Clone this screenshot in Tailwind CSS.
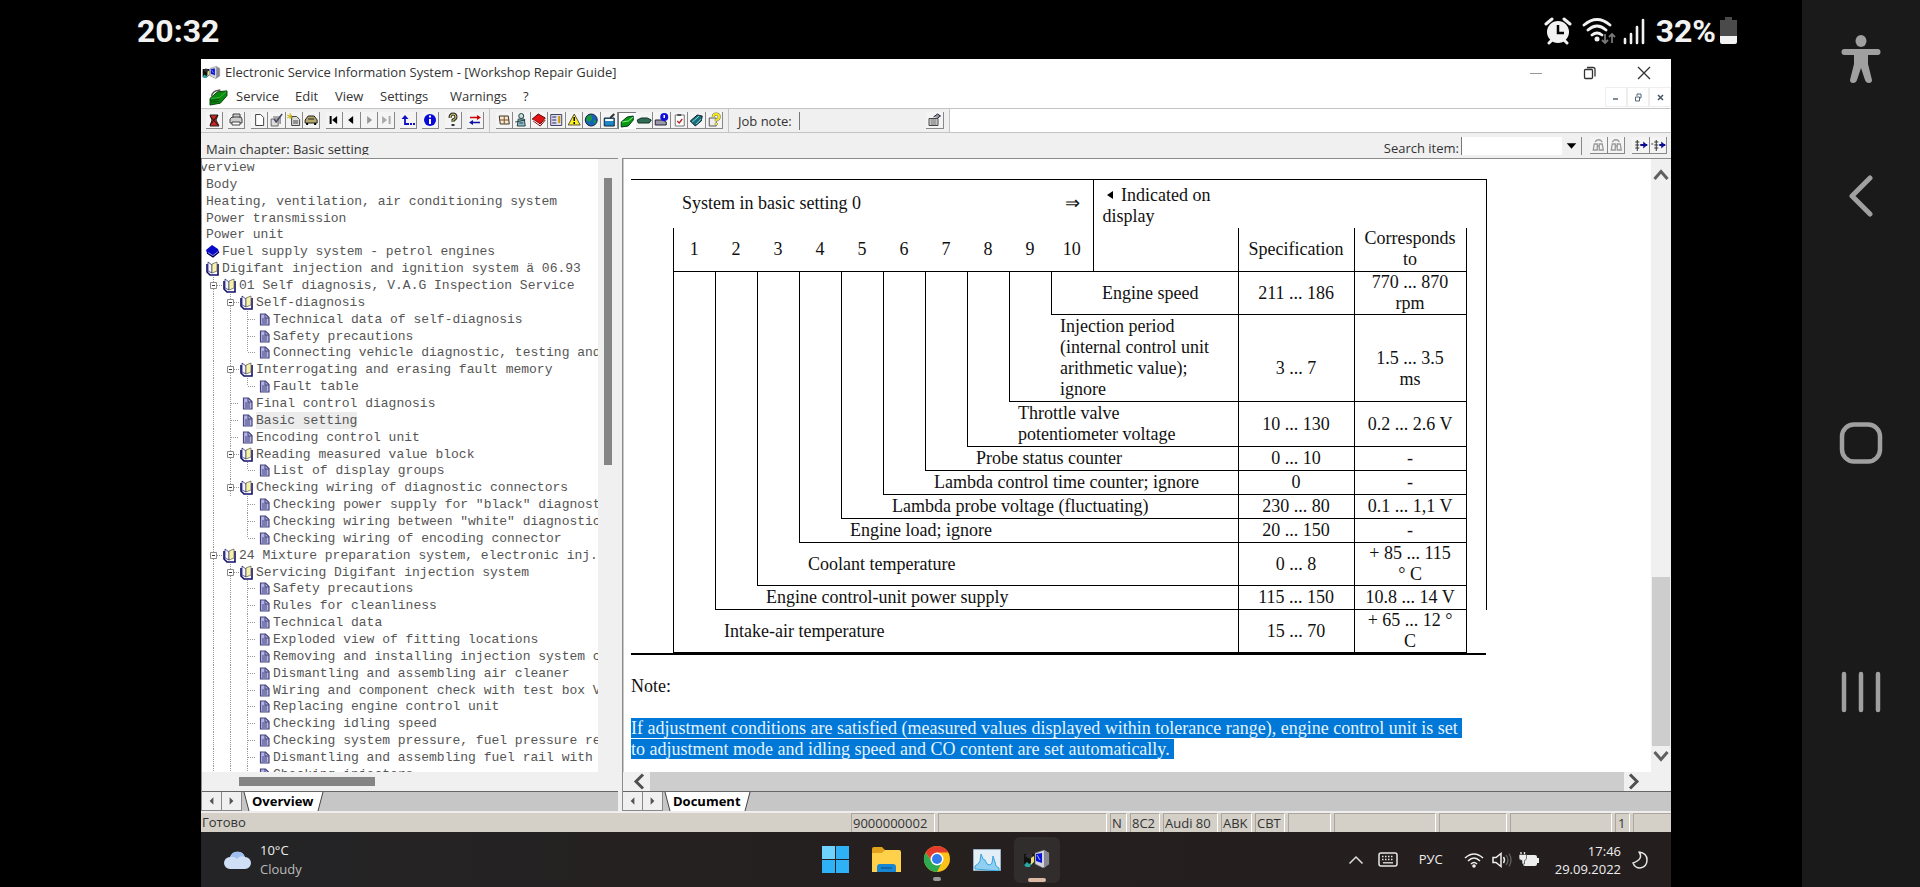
<!DOCTYPE html>
<html lang="en">
<head>
    <meta charset="UTF-8">
    <meta name="viewport" content="width=device-width, initial-scale=1.0">
    <title>Electronic Service Information System</title>
    <script src="https://cdn.jsdelivr.net/npm/@tailwindcss/browser@4"></script>
</head>
<body class="bg-black min-h-screen flex font-['Open_Sans','Noto_Sans',sans-serif] text-[13px] text-[#333] overflow-x-hidden">

    <!-- icons used by the contents tree -->
    <svg class="hidden">
        <symbol id="t-line" viewBox="0 0 17 17"><path d="M8.5 0v17" stroke="#999" stroke-dasharray="1 1"/></symbol>
        <symbol id="t-tee" viewBox="0 0 17 17"><path d="M8.5 0v17M9 8.5h8" stroke="#999" stroke-dasharray="1 1"/></symbol>
        <symbol id="t-end" viewBox="0 0 17 17"><path d="M8.5 0v8M9 8.5h8" stroke="#999" stroke-dasharray="1 1"/></symbol>
        <symbol id="t-box" viewBox="0 0 17 17"><path d="M8.5 0v17M12 8.5h5" stroke="#999" stroke-dasharray="1 1"/><path d="M5.5 5.5h6v6h-6z" fill="#fff" stroke="#8a8a8a"/><path d="M7 8.5h3" stroke="#333"/></symbol>
        <symbol id="t-book" viewBox="0 0 17 17"><path d="M2 4v8l3 3h8V4" fill="none" stroke="#10106a" stroke-width="1.6"/><path d="M3 2l4 3v8l-4-2z" fill="#f4f4ff" stroke="#10106a" stroke-width=".7"/><path d="M7 4l5-2v9l-5 2z" fill="#f8f2a8" stroke="#555" stroke-width=".7"/></symbol>
        <symbol id="t-closed" viewBox="0 0 17 17"><path d="M1 7l6-5 6 4 1 3-6 5-6-4z" fill="#0808c8"/><path d="M2 10l6 4 6-5" fill="none" stroke="#000050" stroke-width="1.2"/><path d="M3 9.5l5 3 5-4" fill="none" stroke="#ccd" stroke-width=".7"/></symbol>
        <symbol id="t-doc" viewBox="0 0 17 17"><path d="M4.5 3h5l3.500 3.500V14H4.500z" fill="#b4b4e4" stroke="#44447c" stroke-width="1.200"/><path d="M9 3v4h4M6 8h5M6 10h5M6 12h5" fill="none" stroke="#44447c"/></symbol>
        <symbol id="app" viewBox="0 0 28 20"><path d="M1 5h10v9l-4 3H1z" fill="#111"/><path d="M2 7l3-3 4 1 1 3-3 2z" fill="#333"/><path d="M1 16l3-3 2 2 3-2-2 5H3z" fill="#2aa7a0"/><path d="M8 9l3-2v6l-3 3z" fill="#eadf80"/><path d="M12 4l9-3 5 3v11l-6 4-8-4z" fill="#d4d4dc" stroke="#555" stroke-width=".6"/><path d="M21 1l5 3v11l-5 4z" fill="#888895"/><path d="M13 5l6-1v10l-6-2z" fill="#0a14d8"/><path d="M14 6l3 5" stroke="#9ab8ff"/></symbol>
        <symbol id="greenbook" viewBox="0 0 20 18"><path d="M1 10L9 3l10-1v5l-7 8-11 2z" fill="#0a8a10" stroke="#053a05"/><path d="M2 10l9-1 7-6" fill="none" stroke="#3fb83f"/><path d="M2 12l9-1M2 14l9-1" stroke="#044d06"/><path d="M3 8q-1-3 4-6l5-1" fill="none" stroke="#555" stroke-width="1.5"/></symbol>
    </svg>

    <div class="flex-1 min-w-0 flex flex-col">

        <!-- phone status bar -->
        <header class="h-[59px] pl-[137px] pr-[65px] pt-[2px] flex items-center justify-between text-[#f2f2f2] font-['Roboto',sans-serif] font-bold text-[32px]">
            <span>20:32</span>
            <div class="flex items-center">
                <svg class="w-[28px] h-[28px] mr-[10px]" viewBox="0 0 28 28"><circle cx="14" cy="15" r="11" fill="#f2f2f2"/><path d="M2 7l6-5M26 7l-6-5M5 26l3-3M23 26l-3-3" stroke="#f2f2f2" stroke-width="3" stroke-linecap="round"/><path d="M14 8v8h6" fill="none" stroke="#000" stroke-width="2.500"/></svg>
                <svg class="w-[34px] h-[28px] mr-[6px]" viewBox="0 0 34 28"><g fill="none" stroke="#f2f2f2" stroke-width="2.800" stroke-linecap="round"><path d="M2 8q13-11 26 0M6 13q9-8 18 0M10 18q5-4 10 0"/></g><circle cx="15" cy="22" r="2.500" fill="#f2f2f2"/><path d="M23 17v9M20 23l3 3 3-3M30 26v-9M27 20l3-3 3 3" fill="none" stroke="#777" stroke-width="1.800"/></svg>
                <svg class="w-[24px] h-[28px] mr-[10px]" viewBox="0 0 24 28"><path d="M3 22v4M9 17v9M15 10v16M21 3v23" stroke="#f2f2f2" stroke-width="2.600" stroke-linecap="round"/></svg>
                <span>32%</span>
                <svg class="w-[17px] h-[27px] ml-1" viewBox="0 0 17 27"><path d="M5 0h7v3h5v16H0V3h5z" fill="#4a4a4a"/><path d="M0 19h17v6q0 2-2 2H2q-2 0-2-2z" fill="#f2f2f2"/></svg>
            </div>
        </header>

        <!-- application window -->
        <main class="flex-1 min-w-0 ml-[201px] mr-[131px] flex flex-col bg-[#f0f0f0]">

            <div class="h-[26px] bg-white flex items-center pl-px pt-px">
                <svg class="w-[19px] h-[15px] mr-1"><use href="#app"/></svg>
                <h1>Electronic Service Information System - [Workshop Repair Guide]</h1>
                <div class="ml-auto flex items-center gap-[40px] pr-5">
                    <button aria-label="Minimize"><svg class="w-[14px] h-[14px]" viewBox="0 0 14 14"><path d="M1 7.500h12" stroke="#999"/></svg></button>
                    <button aria-label="Restore"><svg class="w-[14px] h-[14px]" viewBox="0 0 14 14"><path d="M1.500 4.500q0-1 1-1h6q1 0 1 1v7q0 1-1 1h-6q-1 0-1-1zM4 1.500h6q2 0 2 2v7" fill="none" stroke="#333" stroke-width="1.300"/></svg></button>
                    <button aria-label="Close"><svg class="w-[14px] h-[14px]" viewBox="0 0 14 14"><path d="M1 1l12 12M13 1L1 13" stroke="#333" stroke-width="1.300"/></svg></button>
                </div>
            </div>

            <nav class="h-6 bg-white border-b border-[#c4c4c4] flex items-center pl-2 pt-px">
                <svg class="w-[19px] h-[17px] mr-2"><use href="#greenbook"/></svg>
                <button class="w-[59px] text-left">Service</button>
                <button class="w-10 text-left">Edit</button>
                <button class="w-[45px] text-left">View</button>
                <button class="w-[70px] text-left">Settings</button>
                <button class="w-[73px] text-left">Warnings</button>
                <button>?</button>
                <div class="ml-auto flex h-5">
                    <button class="w-[22px] border border-[#eee]" aria-label="Minimize document"><svg class="w-full h-[18px]" viewBox="0 0 20 18"><path d="M7 11h5" stroke="#567" stroke-width="1.500"/></svg></button>
                    <button class="w-[22px] border border-[#eee]" aria-label="Restore document"><svg class="w-full h-[18px]" viewBox="0 0 20 18"><path d="M7.500 9h4v4h-4zM9 8V6h4v4h-1.500" fill="none" stroke="#567"/></svg></button>
                    <button class="w-[22px] border border-[#eee]" aria-label="Close document"><svg class="w-full h-[18px]" viewBox="0 0 20 18"><path d="M8 7l5 5M13 7l-5 5" stroke="#456" stroke-width="1.500"/></svg></button>
                </div>
            </nav>

            <div class="h-6 bg-white border-b border-[#c4c4c4] flex">
                <div id="toolbar" class="bg-[#f0f0f0] border-r border-[#c4c4c4] w-[749px] flex items-center pl-[5px]"></div>
            </div>

            <div class="h-[25px] flex">
                <p class="pl-[5px] pt-[7px] h-[22px] overflow-hidden leading-[18px]">Main chapter: Basic setting</p>
                <div class="ml-auto flex items-center pr-1">
                    <label for="search" class="mr-[2px] pt-[6px]">Search item:</label>
                    <input id="search" class="w-[101px] h-[18px] bg-white border-l border-[#777] outline-none">
                    <button aria-label="Search history" class="w-[20px] h-[18px] border-r border-[#888]"><svg class="w-full h-full" viewBox="0 0 20 18"><path d="M5 6h10l-5 6z" fill="#000"/></svg></button>
                    <div id="searchtools" class="flex ml-2"></div>
                </div>
            </div>

            <div class="flex-1 min-h-0 flex gap-1">

                <!-- contents tree -->
                <section class="w-[417px] flex flex-col border-t border-l border-[#8c8c8c]">
                    <div class="h-[613px] flex">
                        <ul id="tree" class="flex-1 min-w-0 h-full overflow-hidden bg-white pl-[3px] font-['Liberation_Mono',monospace] text-[#555]"></ul>
                        <div class="w-[20px] pt-[19px] pl-[6px]"><div class="w-2 h-[287px] bg-[#858585]"></div></div>
                    </div>
                    <div class="h-[19px] pl-[37px] pt-[5px]"><div class="w-[136px] h-[9px] bg-[#858585]"></div></div>
                    <div class="h-5 flex bg-[#c6c6c6] border-t border-[#666]">
                        <button aria-label="Previous tab" class="w-5 bg-[#f0f0f0] border-r border-b border-[#888]"><svg class="w-full h-full" viewBox="0 0 20 18"><path d="M12 5v8l-4-4z" fill="#555"/></svg></button>
                        <button aria-label="Next tab" class="w-5 bg-[#f0f0f0] border-r border-b border-[#888]"><svg class="w-full h-full" viewBox="0 0 20 18"><path d="M8 5v8l4-4z" fill="#555"/></svg></button>
                        <svg class="w-[8px] h-[19px]" viewBox="0 0 8 19"><path d="M2 0h6v19H7z" fill="#fff"/><path d="M2 0l5 19" stroke="#444"/></svg>
                        <button class="bg-white text-black font-bold leading-[19px] px-[2px]">Overview</button>
                        <svg class="w-[8px] h-[19px]" viewBox="0 0 8 19"><path d="M0 0h7L2 19H0z" fill="#fff"/><path d="M7 0L2 19" stroke="#444"/></svg>
                    </div>
                </section>

                <!-- document -->
                <section class="flex-1 min-w-0 flex flex-col border-t border-l border-[#8c8c8c]">
                    <div class="h-[613px] flex border-l border-[#c8c8c8]">
                        <article class="flex-1 min-w-0 overflow-hidden bg-white pl-[7px] pt-5 font-['Liberation_Serif',serif] text-[18px] leading-[21px] text-[#111]">
                            <div class="w-[855px] border-b-2 border-black">
                                <table class="w-[855px] table-fixed border-collapse">
                                    <colgroup>
                                        <col class="w-[42px]">
                                        <col class="w-[42px]" span="10">
                                        <col class="w-[145px]">
                                        <col class="w-[116px]">
                                        <col class="w-[112px]">
                                        <col class="w-[20px]">
                                    </colgroup>
                                    <tbody id="display">
                                        <tr class="h-12">
                                            <td class="border-t border-black" rowspan="2"></td>
                                            <td class="border-t border-r border-black px-[9px]" colspan="10"><div class="flex justify-between pr-1"><span>System in basic setting 0</span><span>⇒</span></div></td>
                                            <td class="border-t border-b border-black pl-[9px] pt-[5px] align-top whitespace-nowrap" rowspan="2"><svg class="inline w-[6px] h-[8px] mx-1 mb-1" viewBox="0 0 6 8"><path d="M6 0v8L0 4z"/></svg> Indicated on<br>display</td>
                                            <td class="border-t border-black" colspan="2"></td>
                                            <td class="border-t border-r border-black" rowspan="11"></td>
                                        </tr>
                                        <tr class="h-11 text-center">
                                            <td class="border-l border-black">1</td><td>2</td><td>3</td><td>4</td><td>5</td><td>6</td><td>7</td><td>8</td><td>9</td>
                                            <td class="border-r border-black">10</td>
                                            <th class="border-x border-b border-black font-normal">Specification</th>
                                            <th class="border-x border-b border-black font-normal">Corresponds<br>to</th>
                                        </tr>
                                    </tbody>
                                </table>
                            </div>
                            <p class="mt-[21px]">Note:</p>
                            <p class="mt-[21px] text-[#e6f4ff] whitespace-nowrap"><span class="bg-[#0078d7]">If adjustment conditions are satisfied (measured values displayed within tolerance range), engine control unit is set&nbsp;</span><br><span class="bg-[#0078d7]">to adjustment mode and idling speed and CO content are set automatically.&nbsp;</span></p>
                        </article>
                        <div class="w-[20px] flex flex-col items-center">
                            <button aria-label="Scroll up" class="h-[26px]"><svg class="w-[16px] h-[26px]" viewBox="0 0 16 26"><path d="M1.500 20L8 12.500l6.500 7.500" fill="none" stroke="#606060" stroke-width="3"/></svg></button>
                            <div class="flex-1"></div>
                            <div class="w-[18px] h-[169px] bg-[#cdcdcd]"></div>
                            <button aria-label="Scroll down" class="h-[26px]"><svg class="w-[16px] h-[26px]" viewBox="0 0 16 26"><path d="M1.500 6L8 13.500 14.500 6" fill="none" stroke="#606060" stroke-width="3"/></svg></button>
                        </div>
                    </div>
                    <div class="h-[19px] flex pr-[20px]">
                        <button aria-label="Scroll left" class="w-[27px]"><svg class="w-full h-[19px]" viewBox="0 0 27 19"><path d="M20 2.500l-7 7 7 7" fill="none" stroke="#505050" stroke-width="3"/></svg></button>
                        <div class="flex-1 bg-[#cdcdcd]"></div>
                        <button aria-label="Scroll right" class="w-[27px]"><svg class="w-full h-[19px]" viewBox="0 0 27 19"><path d="M6 2.500l7 7-7 7" fill="none" stroke="#505050" stroke-width="3"/></svg></button>
                    </div>
                    <div class="h-5 flex bg-[#c6c6c6] border-t border-[#666]">
                        <button aria-label="Previous tab" class="w-5 bg-[#f0f0f0] border-r border-b border-[#888]"><svg class="w-full h-full" viewBox="0 0 20 18"><path d="M12 5v8l-4-4z" fill="#555"/></svg></button>
                        <button aria-label="Next tab" class="w-5 bg-[#f0f0f0] border-r border-b border-[#888]"><svg class="w-full h-full" viewBox="0 0 20 18"><path d="M8 5v8l4-4z" fill="#555"/></svg></button>
                        <svg class="w-[8px] h-[19px]" viewBox="0 0 8 19"><path d="M2 0h6v19H7z" fill="#fff"/><path d="M2 0l5 19" stroke="#444"/></svg>
                        <button class="bg-white text-black font-bold leading-[19px] px-[2px]">Document</button>
                        <svg class="w-[8px] h-[19px]" viewBox="0 0 8 19"><path d="M0 0h7L2 19H0z" fill="#fff"/><path d="M7 0L2 19" stroke="#444"/></svg>
                    </div>
                </section>
            </div>

            <footer class="h-[21px] bg-[#d4d0c8] border-t-2 border-[#eee] flex gap-[3px] leading-[19px] whitespace-nowrap">
                <span class="flex-1 pl-px">Готово</span>
                <span class="w-[84px] pl-px border-t border-l border-r border-t-[#aaa69e] border-l-[#aaa69e] border-r-white">9000000002</span>
                <span class="w-[169px] border-t border-l border-r border-t-[#aaa69e] border-l-[#aaa69e] border-r-white"></span>
                <span class="w-[17px] pl-px border-t border-l border-r border-t-[#aaa69e] border-l-[#aaa69e] border-r-white">N</span>
                <span class="w-[30px] pl-px border-t border-l border-r border-t-[#aaa69e] border-l-[#aaa69e] border-r-white">8C2</span>
                <span class="w-[55px] pl-px border-t border-l border-r border-t-[#aaa69e] border-l-[#aaa69e] border-r-white">Audi 80</span>
                <span class="w-[31px] pl-px border-t border-l border-r border-t-[#aaa69e] border-l-[#aaa69e] border-r-white">ABK</span>
                <span class="w-[30px] pl-px border-t border-l border-r border-t-[#aaa69e] border-l-[#aaa69e] border-r-white">CBT</span>
                <span class="w-[43px] border-t border-l border-r border-t-[#aaa69e] border-l-[#aaa69e] border-r-white"></span>
                <span class="w-[102px] border-t border-l border-r border-t-[#aaa69e] border-l-[#aaa69e] border-r-white"></span>
                <span class="w-[68px] border-t border-l border-r border-t-[#aaa69e] border-l-[#aaa69e] border-r-white"></span>
                <span class="w-[102px] border-t border-l border-r border-t-[#aaa69e] border-l-[#aaa69e] border-r-white"></span>
                <span class="w-[15px] pl-[2px] border-t border-l border-r border-t-[#aaa69e] border-l-[#aaa69e] border-r-white">1</span>
                <span class="w-[38px] border-t border-l border-t-[#aaa69e] border-l-[#aaa69e]"></span>
            </footer>

            <!-- Windows taskbar -->
            <div class="h-[55px] grid grid-cols-[1fr_auto_1fr] items-center bg-linear-to-r from-[#242426] via-[#251f1e] to-[#241e1f] text-[#eee]">
                <div class="flex items-center gap-2 pl-[22px] leading-[19px]">
                    <svg class="w-[29px] h-[20px]" viewBox="0 0 29 20"><path d="M7 19a6 6 0 010-12 8 8 0 0115 0 6 6 0 010 12z" fill="#cfdff5"/><path d="M7 7a8 8 0 0115 0q-5-2-8 2-3-3-7-2z" fill="#9fbfee"/></svg>
                    <div><p>10°C</p><p class="text-[#bbb]">Cloudy</p></div>
                </div>
                <div class="flex items-center pl-[10px]">
                    <button aria-label="Start" class="w-[27px] mr-[23px]"><svg class="w-[27px] h-[27px]" viewBox="0 0 27 27"><path d="M0 0h13v13H0zM14 0h13v13H14zM0 14h13v13H0zM14 14h13v13H14z" fill="#2fb2f5"/><path d="M0 0h13v13H0z" fill="#6ed4ff"/></svg></button>
                    <button aria-label="Files" class="w-[29px] mr-[22px]"><svg class="w-[29px] h-[27px]" viewBox="0 0 29 27"><path d="M0 3q0-2 2-2h8l3 3h14v5H0z" fill="#e0a21c"/><path d="M0 7h10l3-3h14q2 0 2 2v20H0z" fill="#ffd04a"/><path d="M5 26v-5q0-3 3-3h13q3 0 3 3v5z" fill="#1787d4"/><path d="M9 22h11" stroke="#0b5da0" stroke-width="1.500"/></svg></button>
                    <button aria-label="Chrome" class="w-[28px] mr-[22px]"><svg class="w-[28px] h-[38px] mt-[6px]" viewBox="0 0 28 38"><circle cx="14" cy="15" r="13" fill="#fbc116"/><path d="M2.700 8.500A13 13 0 0014 28l5-10-10 0z" fill="#2da94f"/><path d="M2.700 8.500A13 13 0 0125.300 8.500H14l-5 9z" fill="#e33b2e"/><circle cx="14" cy="15" r="6.500" fill="#fff"/><circle cx="14" cy="15" r="5" fill="#2f7cea"/><rect x="10" y="33" width="8" height="4" rx="2" fill="#999"/></svg></button>
                    <button aria-label="Performance monitor" class="w-[28px] mr-[13px]"><svg class="w-[28px] h-[22px]" viewBox="0 0 28 22"><path d="M.5.500h27v21H.5z" fill="#e3eef6" stroke="#9bb0c0"/><path d="M2 20v-3l3-2 2-3 1-7 2 5 2 1 2 4 3 1 2-2 1-7 2 6 1 4 3 2v3z" fill="#8fd0f2" stroke="#3aa3dc"/></svg></button>
                    <button aria-label="Service information" class="w-[46px] h-[46px] rounded-md bg-[#322d2d] flex flex-col items-center pt-[12px]"><svg class="w-[28px] h-[20px]"><use href="#app"/></svg><span class="mt-[9px] w-[18px] h-1 rounded-full bg-[#dcb9a4]"></span></button>
                </div>
                <div class="flex items-center justify-end pr-[23px]">
                    <button aria-label="Hidden icons" class="mr-[14px]"><svg class="w-[16px] h-[10px]" viewBox="0 0 16 10"><path d="M1.500 8.500L8 2l6.500 6.500" fill="none" stroke="#ddd" stroke-width="1.500"/></svg></button>
                    <svg class="w-[20px] h-[15px] mr-[21px]" viewBox="0 0 20 15"><rect x="1" y="1" width="18" height="13" rx="2" fill="none" stroke="#e6e6e6" stroke-width="1.500"/><path d="M4 4.500h12M4 7.500h12" stroke="#e6e6e6" stroke-width="1.500" stroke-dasharray="1.500 1.500"/><path d="M5 10.800h10" stroke="#e6e6e6" stroke-width="1.300"/></svg>
                    <span class="mr-[21px]">РУС</span>
                    <svg class="w-[20px] h-[16px] mr-2" viewBox="0 0 20 16"><path d="M1 6q9-8 18 0M4 9q6-6 12 0M7 12q3-3 6 0" fill="none" stroke="#eee" stroke-width="1.600"/><circle cx="10" cy="14" r="1.800" fill="#eee"/></svg>
                    <svg class="w-[20px] h-[16px] mr-[7px]" viewBox="0 0 20 16"><path d="M1 5.500h3l5-4v13l-5-4H1z" fill="none" stroke="#eee" stroke-width="1.500"/><path d="M11.500 5q2 3 0 6" fill="none" stroke="#eee" stroke-width="1.400"/><path d="M14 3q4 5 0 10M17 1.500q4 6.500 0 13" fill="none" stroke="#666" stroke-width="1.200"/></svg>
                    <svg class="w-[20px] h-[16px] mr-4" viewBox="0 0 20 16"><path d="M7 3h9q2 0 2 2v7q0 2-2 2H6q-2 0-2-2V9" fill="#eee"/><path d="M18 6h2v5h-2z" fill="#eee"/><path d="M2 0v3M5.500 0v3" stroke="#eee" stroke-width="1.300"/><path d="M0 2.500h7.500V6q0 2-2 2.500V12H3V8.500Q0 8 0 6z" fill="#eee" stroke="#241e1f" stroke-width=".6"/></svg>
                    <div class="text-right leading-[18px] mr-[10px]"><p>17:46</p><p>29.09.2022</p></div>
                    <svg class="w-[17px] h-[18px]" viewBox="0 0 17 18"><path d="M8 1q5 7-6 11 2 5 7 5 7-1 7-8 0-7-8-8z" fill="none" stroke="#e6e6e6" stroke-width="1.500" stroke-linejoin="round"/></svg>
                </div>
            </div>
        </main>
    </div>

    <!-- phone navigation -->
    <aside class="w-[118px] bg-[#1a1a1a] flex flex-col items-center pt-[35px]">
        <button aria-label="Accessibility" class="mb-[92px]"><svg class="w-[40px] h-[48px]" viewBox="0 0 40 48"><g fill="#a0a0a0"><ellipse cx="20" cy="6" rx="5.500" ry="6"/><path d="M3.500 14h33a3 3 0 010 6H27v9l4 16q0 3-3 3t-4-3l-4-12-4 12q-1 3-4 3t-3-3l4-16v-9H3.500a3 3 0 010-6z"/></g></svg></button>
        <button aria-label="Back" class="mb-[205px]"><svg class="w-[26px] h-[42px]" viewBox="0 0 26 42"><path d="M22 3L4 21l18 18" fill="none" stroke="#a0a0a0" stroke-width="5" stroke-linecap="round" stroke-linejoin="round"/></svg></button>
        <button aria-label="Home" class="mb-[207px]"><svg class="w-[44px] h-[42px]" viewBox="0 0 44 42"><rect x="3" y="2.500" width="38" height="37" rx="12" fill="none" stroke="#a0a0a0" stroke-width="4.500"/></svg></button>
        <button aria-label="Recent apps"><svg class="w-[40px] h-[42px]" viewBox="0 0 40 42"><path d="M3 3v36M20 3v36M37 3v36" stroke="#a0a0a0" stroke-width="4.500" stroke-linecap="round"/></svg></button>
    </aside>

    <script>
        // guide letters: | line, + branch, L last branch, - open node
        const guides = { '|': '#t-line', '+': '#t-tee', 'L': '#t-end', '-': '#t-box', ' ': '' };
        const chapters = [
            ['', '', 'verview'],
            ['', '', 'Body'],
            ['', '', 'Heating, ventilation, air conditioning system'],
            ['', '', 'Power transmission'],
            ['', '', 'Power unit'],
            ['', 'closed', 'Fuel supply system - petrol engines'],
            ['', 'book', 'Digifant injection and ignition system ä 06.93'],
            ['-', 'book', '01 Self diagnosis, V.A.G Inspection Service'],
            ['|-', 'book', 'Self-diagnosis'],
            ['||+', 'doc', 'Technical data of self-diagnosis'],
            ['||+', 'doc', 'Safety precautions'],
            ['||L', 'doc', 'Connecting vehicle diagnostic, testing and'],
            ['|-', 'book', 'Interrogating and erasing fault memory'],
            ['||L', 'doc', 'Fault table'],
            ['|+', 'doc', 'Final control diagnosis'],
            ['|+', 'doc', 'Basic setting'],
            ['|+', 'doc', 'Encoding control unit'],
            ['|-', 'book', 'Reading measured value block'],
            ['||L', 'doc', 'List of display groups'],
            ['|-', 'book', 'Checking wiring of diagnostic connectors'],
            ['| +', 'doc', 'Checking power supply for "black" diagnostic'],
            ['| +', 'doc', 'Checking wiring between "white" diagnostic'],
            ['| L', 'doc', 'Checking wiring of encoding connector'],
            ['-', 'book', '24 Mixture preparation system, electronic inj.,'],
            ['|-', 'book', 'Servicing Digifant injection system'],
            ['||+', 'doc', 'Safety precautions'],
            ['||+', 'doc', 'Rules for cleanliness'],
            ['||+', 'doc', 'Technical data'],
            ['||+', 'doc', 'Exploded view of fitting locations'],
            ['||+', 'doc', 'Removing and installing injection system co'],
            ['||+', 'doc', 'Dismantling and assembling air cleaner'],
            ['||+', 'doc', 'Wiring and component check with test box V'],
            ['||+', 'doc', 'Replacing engine control unit'],
            ['||+', 'doc', 'Checking idling speed'],
            ['||+', 'doc', 'Checking system pressure, fuel pressure reg'],
            ['||+', 'doc', 'Dismantling and assembling fuel rail with i'],
            ['||+', 'doc', 'Checking injectors']
        ];

        const cell = id => `<svg class="w-[17px] h-[17px] shrink-0">${id ? `<use href="${id}"/>` : ''}</svg>`;
        document.getElementById('tree').innerHTML = '<li><ul class="h-[624px] flex flex-col">' + chapters.map(([path, icon, name]) => {
            const text = name === 'Basic setting' ? 'bg-[#ececec]' : (name === 'verview' ? '-ml-[5px]' : (icon ? '' : 'pl-px'));
            return `<li class="flex-1 min-h-0 flex items-center whitespace-pre leading-[17px]">${[...path].map(c => cell(guides[c])).join('')}${icon ? cell('#t-' + icon) : ''}<a href="#" class="${text}">${name}</a></li>`;
        }).join('') + '</ul></li>';

        // display group table; the brackets are cells of falling rowspan
        const rows = [
            ['Engine speed', '211 ... 186', '770 ... 870<br>rpm'],
            ['Injection period<br>(internal control unit<br>arithmetic value);<br>ignore', '3 ... 7', '1.5 ... 3.5<br>ms'],
            ['Throttle valve<br>potentiometer voltage', '10 ... 130', '0.2 ... 2.6 V'],
            ['Probe status counter', '0 ... 10', '-'],
            ['Lambda control time counter; ignore', '0', '-'],
            ['Lambda probe voltage (fluctuating)', '230 ... 80', '0.1 ... 1,1 V'],
            ['Engine load; ignore', '20 ... 150', '-'],
            ['Coolant temperature', '0 ... 8', '+ 85 ... 115<br>° C'],
            ['Engine control-unit power supply', '115 ... 150', '10.8 ... 14 V'],
            ['Intake-air temperature', '15 ... 70', '+ 65 ... 12 °<br>C']
        ];
        document.getElementById('display').insertAdjacentHTML('beforeend', rows.map(([name, spec, value], i) => {
            let brackets = '';
            if (i === 0) {
                brackets = '<td rowspan="10"></td>';
                for (let n = 10; n > 0; n--) brackets += `<td rowspan="${n}" class="border border-r-0 border-black"></td>`;
            }
            const drop = i === 1 ? 'pt-[21px]' : '';
            return `<tr class="h-6">${brackets}
                <td colspan="${i + 1}" class="border-b border-black pl-[9px] pt-px pb-px whitespace-nowrap">${name}</td>
                <td class="border border-black text-center whitespace-nowrap ${drop}">${spec}</td>
                <td class="border border-black text-center whitespace-nowrap ${drop}">${value}</td>
                ${i === 9 ? '<td></td>' : ''}</tr>`;
        }).join(''));

        // toolbar pictures, 16x16
        const pics = {
            'Exit': '<path d="M4 3h8l-2 5 3 6H4l2-6z" fill="#c22" stroke="#222"/><path d="M4 4l8 9M12 3l-8 10" stroke="#111"/>',
            'Print': '<path d="M5 6V2h7v4M2 7l2-2h9l1 2v4H2z" fill="#ccc" stroke="#444"/><path d="M4 10h8v3H4z" fill="#fff" stroke="#444"/>',
            'New': '<path d="M4.500 2.500h5l3 3v8h-8z" fill="#fff" stroke="#444"/>',
            'Tick': '<path d="M3 7h7v7H3zM5 5h7v7" fill="#ddd" stroke="#666"/><path d="M6 7l2 3 6-8" fill="none" stroke="#446" stroke-width="1.500"/>',
            'New page': '<path d="M5.500 4.500h5l3 3v6h-8z" fill="#ddd" stroke="#444"/><path d="M7 9h5M7 11h5" stroke="#444"/><path d="M1 3l6 3M4 1v6M1 6l5-3" stroke="#c9b400"/>',
            'Vehicle': '<path d="M2 8l3-4h6l3 4v3H2z" fill="#b5a76a" stroke="#222"/><path d="M5 7h6" stroke="#222"/><path d="M3 12h2M11 12h2" stroke="#000" stroke-width="2"/>',
            'First': '<path d="M4.500 4v8" stroke="#000" stroke-width="2"/><path d="M11 4v8L6 8z"/>',
            'Back': '<path d="M10 4v8L5 8z"/>',
            'Forward': '<path d="M6 4v8l5-4z" fill="#999"/>',
            'Last': '<path d="M4 4v8l5-4z" fill="#aaa"/><path d="M11.500 4v8" stroke="#aaa" stroke-width="2"/>',
            'Up': '<path d="M5 4v8h4" fill="none" stroke="#1010c8" stroke-width="1.800"/><path d="M1.500 7L5 3l3.500 4z" fill="#1010c8"/><path d="M10 12h5" stroke="#1010c8" stroke-width="1.800" stroke-dasharray="2 1"/>',
            'Info': '<circle cx="8" cy="8" r="6" fill="#0808d8"/><path d="M8 7v5M8 3.500v2" stroke="#fff" stroke-width="2"/>',
            'Help': '<path d="M5 6q0-4 3-4t3 3q0 2-3 3v2M8 12v2" fill="none" stroke="#333" stroke-width="3"/><path d="M5 6q0-4 3-4t3 3q0 2-3 3v2" fill="none" stroke="#d8d060"/>',
            'Swap': '<path d="M3 5.500h8" stroke="#c00" stroke-width="1.500"/><path d="M10 3l4 2.500L10 8z" fill="#c00"/><path d="M13 10.500H5" stroke="#11a" stroke-width="1.500"/><path d="M6 8l-4 2.500L6 13z" fill="#11a"/>',
            'Parts': '<path d="M3 4h9l1 8H4z" fill="#eec" stroke="#432"/><path d="M3 8h10M8 4v8" stroke="#843"/>',
            'Mechanic': '<circle cx="8" cy="4" r="2.500" fill="#cdd" stroke="#244"/><path d="M4 14l1-7h6l1 7z" fill="#9bc" stroke="#244"/><path d="M2 10l10-2M6 11h4" stroke="#244"/>',
            'Manual': '<path d="M1 7l6-5 7 4-5 6z" fill="#e01414" stroke="#600"/><path d="M2 9l7 5 5-6" fill="none" stroke="#700"/><path d="M2 8l7 5" stroke="#fff" stroke-width=".7"/>',
            'List': '<path d="M2.500 2.500h11v11h-11z" fill="#dde" stroke="#446"/><path d="M4 5h4M4 8h4M4 11h4" stroke="#226"/><path d="M11 4v7" stroke="#c90" stroke-width="2"/>',
            'Warning': '<path d="M8 2l6 11H2z" fill="#fff11a" stroke="#554"/><path d="M8 5v4M8 10v2" stroke="#000" stroke-width="1.500"/>',
            'Globe': '<circle cx="8" cy="8" r="6" fill="#1563b8" stroke="#123"/><path d="M4 4l4-1 1 4-3 3-3-2zM10 9l3-1-1 4z" fill="#1b9a3c"/>',
            'Oil': '<path d="M3 6h10v8H3z" fill="#1c86c8" stroke="#123"/><path d="M4 7h8v2H4z" fill="#fff"/><path d="M9 6l4-4" stroke="#333" stroke-width="2"/>',
            'Guide': '<path d="M2 9l6-5 6-1v4l-5 6-7 1z" fill="#0a9a10" stroke="#032"/><path d="M3 9l6-1 5-4" fill="none" stroke="#8e8"/>',
            'Body': '<path d="M1 8l4-2h6l4 2-2 3H2z" fill="#2f6b55" stroke="#132"/>',
            'Labour': '<path d="M2 8h7l4 2v3H2z" fill="#99a" stroke="#223"/><circle cx="11" cy="5" r="4" fill="#1010d8"/><path d="M11 3v3" stroke="#fff" stroke-width="1.500"/>',
            'Checklist': '<path d="M4 3h9v11H4z" fill="#fff" stroke="#777"/><path d="M6 3h4" stroke="#555" stroke-width="2"/><path d="M6 9l2 2 3-4" fill="none" stroke="#b22" stroke-width="1.300"/>',
            'Wiring': '<path d="M2 9l7-6 5 1-1 5-6 5z" fill="#1b6f78" stroke="#123"/><path d="M4 10l7-6M8 12l5-5" stroke="#7dd"/>',
            'Question': '<path d="M3 6h7v8H3z" fill="#eee" stroke="#555"/><path d="M7 5q0-3 3-3t3 3q0 2-3 3v1M10 11v2" fill="none" stroke="#776" stroke-width="3"/><path d="M7 5q0-3 3-3t3 3q0 2-3 3v1M10 11v2" fill="none" stroke="#f4e81c" stroke-width="2"/>',
            'Job': '<path d="M2.500 6.500h9v7h-9z" fill="#ddd" stroke="#444"/><path d="M4 8h6M4 10h6M4 12h6" stroke="#666"/><path d="M7 5l4-3 3 2-3 2" fill="#99a" stroke="#223"/>',
            'Find': '<path d="M4 7h3v6H3zM9 7h3l1 6H9zM7 9h2M5 5q1-3 5-2l2 2" fill="none" stroke="#999" stroke-width="1.300"/>',
            'Find next': '<path d="M4 7h3v6H3zM9 7h3l1 6H9zM7 9h2M11 5q-1-3-5-2L4 5" fill="none" stroke="#999" stroke-width="1.300"/>',
            'Mark': '<path d="M5 3v11M3 5h4M3 8h4M3 11h4" stroke="#333"/><path d="M8 8h7" stroke="#0c0c90" stroke-width="2"/><path d="M11 4.500L15 8l-4 3.500z" fill="#0c0c90"/>',
            'Next mark': '<path d="M6 3v11M4 5h4M4 8h4M4 11h4M1 7h2" stroke="#333"/><path d="M9 8h6" stroke="#0c0c90" stroke-width="2"/><path d="M11 4.500L15 8l-4 3.500z" fill="#0c0c90"/>'
        };
        const tool = name => {
            const look = name === 'Guide' ? 'border-t border-l border-[#777] bg-white' : 'border-r border-b border-[#888] bg-[#f4f4f4]';
            return `<button aria-label="${name}" title="${name}" class="flex-1 h-[17px] ${look}"><svg class="w-full h-full" viewBox="0 0 16 16">${pics[name]}</svg></button>`;
        };
        const group = (size, ...names) => `<div class="flex ${size}">${names.map(tool).join('')}</div>`;

        document.getElementById('toolbar').innerHTML =
            group('w-[17px] mr-[5px]', 'Exit') + group('w-[17px] mr-[6px]', 'Print') +
            group('w-[69px] mr-[6px]', 'New', 'Tick', 'New page', 'Vehicle') +
            group('w-[69px] mr-[5px]', 'First', 'Back', 'Forward', 'Last') +
            group('w-[17px] mr-[5px]', 'Up') + group('w-[17px] mr-[6px]', 'Info') +
            group('w-[17px] mr-[5px]', 'Help') + group('w-[17px] mr-[5px]', 'Swap') +
            '<div class="w-px h-full bg-[#c4c4c4] mr-[6px]"></div>' +
            group('w-[227px] mr-[5px]', 'Parts', 'Mechanic', 'Manual', 'List', 'Warning', 'Globe', 'Oil', 'Guide', 'Body', 'Labour', 'Checklist', 'Wiring', 'Question') +
            '<div class="w-px h-full bg-[#c4c4c4] mr-[9px]"></div>' +
            '<label for="job" class="w-[61px] whitespace-nowrap pt-[2px]">Job note:</label><input id="job" class="w-[118px] h-[18px] border-l border-[#777] outline-none mr-[9px]">' +
            group('w-[18px]', 'Job');
        document.getElementById('searchtools').innerHTML =
            group('w-[35px] mr-[7px]', 'Find', 'Find next') + group('w-[35px]', 'Mark', 'Next mark');
    </script>
</body>
</html>
